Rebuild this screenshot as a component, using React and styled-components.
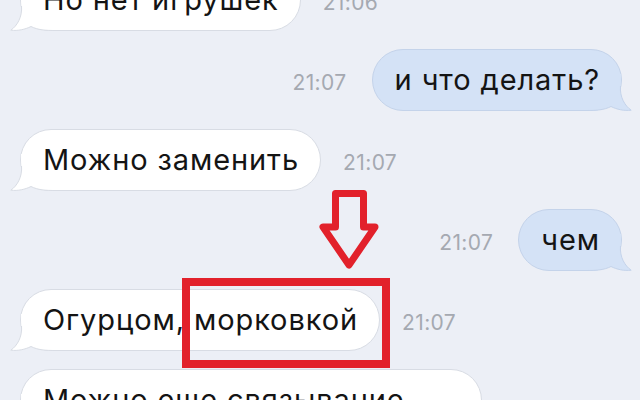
import React from "react";
import styled, { createGlobalStyle } from "styled-components";

const GlobalStyle = createGlobalStyle`
  html, body { margin: 0; padding: 0; }
  body {
    background: #ECEFF6;
    font-family: Inter, "Liberation Sans", Arial, sans-serif;
  }
`;

const Page = styled.div`
  position: relative;
  width: 640px;
  height: 400px;
  overflow: hidden;
  background: #ECEFF6;
`;

const Thread = styled.div`
  display: flex;
  flex-direction: column;
  gap: 18px;
  margin-top: -31px;
  padding: 0 18px 0 20px;
`;

const Row = styled.div`
  display: flex;
  align-items: center;
  gap: ${(p) => (p.$out ? "25px" : "22px")};
  justify-content: ${(p) => (p.$out ? "flex-end" : "flex-start")};
`;

const Bubble = styled.div`
  position: relative;
  box-sizing: border-box;
  padding: 11px 21px 11px 22px;
  font-size: 29px;
  line-height: 38px;
  letter-spacing: 0.9px;
  border-radius: 31px;
  white-space: nowrap;
  color: #141414;
  background: ${(p) => (p.$out ? "#D4E2F6" : "#FFFFFF")};
  border: 1px solid ${(p) => (p.$out ? "#C4D3EA" : "#D8DCE4")};
  ${(p) => (p.$width ? `width: ${p.$width}px;` : "")}
`;

const BubbleText = styled.span`
  position: relative;
  z-index: 1;
`;

const TailSvg = styled.svg`
  position: absolute;
  bottom: -1px;
  width: 46px;
  height: 37px;
  ${(p) => (p.$out ? "right: -11px; transform: scaleX(-1);" : "left: -11px;")}
`;

const Time = styled.span`
  font-size: 21px;
  padding-top: 5px;
  color: #A5A9B1;
  letter-spacing: 0.4px;
`;

const Frame = styled.div`
  position: absolute;
  left: 182px;
  top: 278px;
  width: 208px;
  height: 90px;
  box-sizing: border-box;
  border: 8px solid #E2212B;
`;

const ArrowSvg = styled.svg`
  position: absolute;
  left: 316px;
  top: 186px;
  width: 66px;
  height: 86px;
`;

function Tail({ out }) {
  const fill = out ? "#D4E2F6" : "#FFFFFF";
  const stroke = out ? "#C4D3EA" : "#D8DCE4";
  const edge =
    "M11.5,12 C12.5,23 7,32 0.8,36.2 C8,37 15,35.5 21,32.5 C28,36 35,36.5 46,36.5";
  return (
    <TailSvg $out={out} viewBox="0 0 46 37">
      <path d={edge + " L46,0 L11,0 Z"} fill={fill} />
      <path d={edge} fill="none" stroke={stroke} strokeWidth="1" />
    </TailSvg>
  );
}

function Message({ out, text, time, width }) {
  return (
    <Row $out={out}>
      {out && time && <Time>{time}</Time>}
      <Bubble $out={out} $width={width}>
        <Tail out={out} />
        <BubbleText>{text}</BubbleText>
      </Bubble>
      {!out && time && <Time>{time}</Time>}
    </Row>
  );
}

const messages = [
  { text: "Но нет игрушек", time: "21:06" },
  { text: "и что делать?", time: "21:07", out: true },
  { text: "Можно заменить", time: "21:07" },
  { text: "чем", time: "21:07", out: true },
  { text: "Огурцом, морковкой", time: "21:07" },
  { text: "Можно еще связывание", width: 462 },
];

export default function App() {
  return (
    <>
      <GlobalStyle />
      <Page>
        <Thread>
          {messages.map((m, i) => (
            <Message key={i} {...m} />
          ))}
        </Thread>
        <ArrowSvg viewBox="0 0 66 86">
          <polygon
            points="19.5,7.5 47.5,7.5 47.5,41 59,41 33,79 7,41 19.5,41"
            fill="none"
            stroke="#E2212B"
            strokeWidth="7"
            strokeLinejoin="round"
          />
        </ArrowSvg>
        <Frame />
      </Page>
    </>
  );
}
